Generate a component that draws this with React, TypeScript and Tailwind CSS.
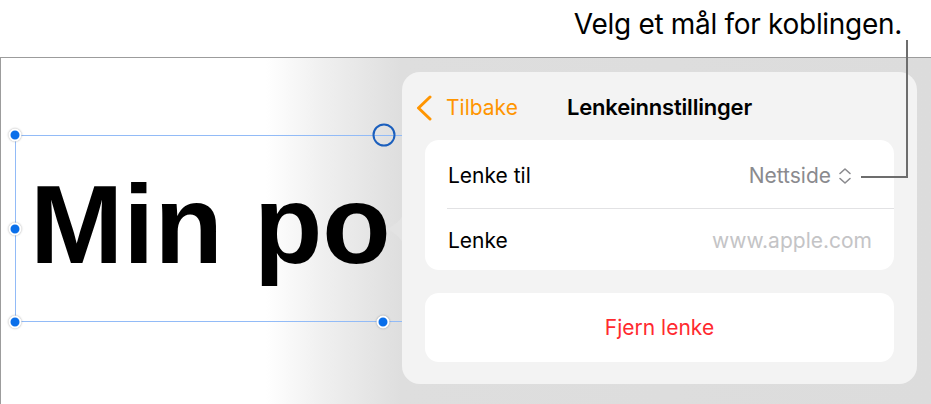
import { ReactNode } from "react";

const sf = { fontFamily: "Inter, 'Noto Sans', sans-serif" };

function Dot({ x, y }: { x: number; y: number }) {
  // x/y are canvas coordinates, handle is centred on them
  return (
    <div
      className="absolute w-[13px] h-[13px] -translate-x-1/2 -translate-y-1/2 rounded-full bg-[#0a6fea] border-2 border-white shadow-[0_0_2px_rgba(0,0,0,0.35)]"
      style={{ left: x, top: y }}
    />
  );
}

function Row({ children, className }: { children: ReactNode; className?: string }) {
  return <div className={`flex items-center justify-between ${className ?? ""}`}>{children}</div>;
}

export default function App() {
  return (
    <div className="relative w-[931px] h-[404px] overflow-hidden bg-white" style={sf}>
      {/* callout */}
      <div className="h-[57px] flex justify-end pr-[29px] pt-[8px]">
        <span className="text-[28px] leading-[32px] text-black tracking-[-0.3px]">Velg et mål for koblingen.</span>
      </div>

      {/* document canvas */}
      <div className="relative h-[347px] border-t-[1.5px] border-l-[1.5px] border-[#9c9c9c] bg-[linear-gradient(to_right,#ffffff_0px,#ffffff_265px,#f0f0f0_320px,#dedede_400px,#dcdcdc_931px)]">
        {/* selection box */}
        <div className="absolute left-[14px] top-[77px] w-[420px] h-[187px] border border-[#92bbf7]" />
        <div
          className="absolute left-[29px] top-[111px] text-[112px] leading-none font-bold text-black"
          style={{ fontFamily: "'Liberation Sans', Arial, sans-serif" }}
        >
          Min po
        </div>
        <Dot x={14} y={77} />
        <Dot x={14} y={171} />
        <Dot x={14} y={264} />
        <Dot x={382} y={264} />
        <div className="absolute left-[383px] top-[77px] w-[23px] h-[23px] -translate-x-1/2 -translate-y-1/2 rounded-full border-2 border-[#1b5fbd]" />

        {/* popover arrow */}
        <svg className="absolute left-[384px] top-[140px]" width="22" height="62" viewBox="0 0 22 62">
          <path d="M22 0 C22 18 12 26 2 31 C12 36 22 44 22 62 Z" fill="#e3e3e3" />
        </svg>

        {/* link settings popover */}
        <div className="absolute left-[401px] top-[14px] w-[515px] h-[312px] rounded-[18px] bg-[#f3f3f3]">
          <div className="grid grid-cols-[1fr_auto_1fr] items-center h-[68px] pt-[3px]">
            <div className="flex items-center gap-[13px] pl-[13px] text-[#ff9500]">
              <svg width="18" height="26" viewBox="0 0 18 26" fill="none">
                <path d="M15 2 L3.5 13 L15 24" stroke="#ff9500" strokeWidth="3" strokeLinecap="round" strokeLinejoin="round" />
              </svg>
              <span className="text-[21px]">Tilbake</span>
            </div>
            <span className="text-[22px] font-semibold text-black tracking-[-0.2px]">Lenkeinnstillinger</span>
            <div />
          </div>

          <div className="mx-[23px] rounded-[14px] bg-white">
            <Row className="h-[68px] pl-[23px] pr-[41px] pt-[4px]">
              <span className="text-[21px] text-black">Lenke til</span>
              <span className="flex items-center gap-[6px] text-[21px] text-[#8a8a8e]">
                Nettside
                <svg width="16" height="18" viewBox="0 0 16 18" fill="none">
                  <path d="M3 6.5 L8 2 L13 6.5 M3 11.5 L8 16 L13 11.5" stroke="#8a8a8e" strokeWidth="1.6" strokeLinecap="round" strokeLinejoin="round" />
                </svg>
              </span>
            </Row>
            <div className="ml-[22px] h-px bg-[#e2e2e4]" />
            <Row className="h-[61px] pl-[23px] pr-[22px] pt-[2px]">
              <span className="text-[21px] text-black">Lenke</span>
              <span className="text-[21px] text-[#c4c4c6]">www.apple.com</span>
            </Row>
          </div>

          <div className="mx-[23px] mt-[23px] h-[69px] rounded-[14px] bg-white flex items-center justify-center">
            <span className="text-[21px] text-[#ff2a2f]">Fjern lenke</span>
          </div>
        </div>
      </div>

      {/* leader line */}
      <svg className="absolute left-0 top-0 pointer-events-none" width="931" height="404">
        <path d="M907 40 V177 H861" stroke="#6d6d6d" strokeWidth="2" fill="none" />
      </svg>
    </div>
  );
}
